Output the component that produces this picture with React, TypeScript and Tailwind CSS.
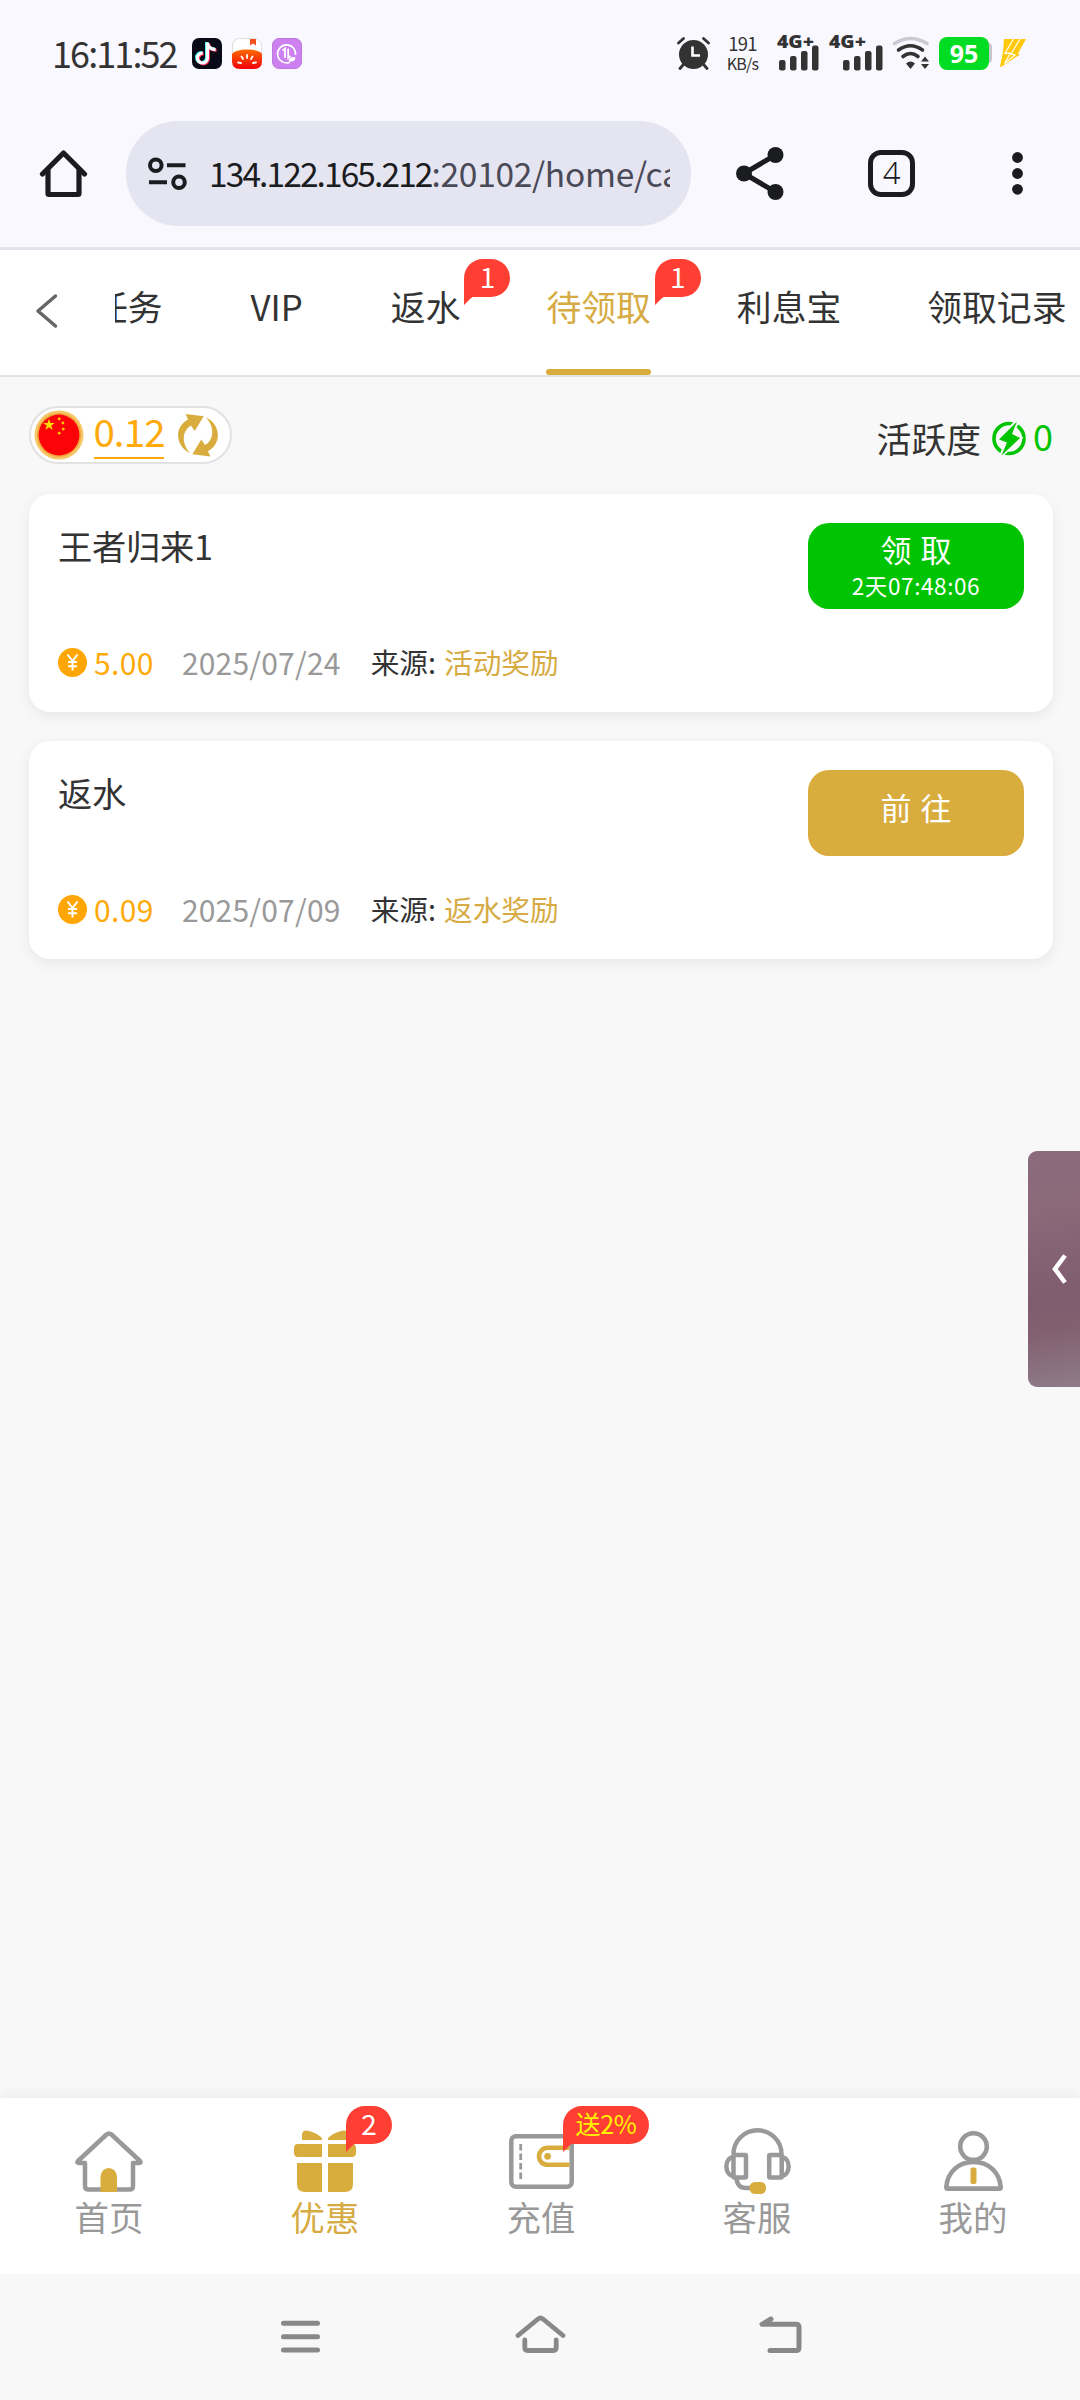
import type { ReactNode } from "react"
import clsx from "clsx"

const tabs = [
  { label: "任务" },
  { label: "VIP" },
  { label: "返水", badge: "1" },
  { label: "待领取", badge: "1", active: true },
  { label: "利息宝" },
  { label: "领取记录" },
]

const rewards = [
  {
    title: "王者归来1",
    amount: "5.00",
    date: "2025/07/24",
    source: "活动奖励",
    action: "领取",
    countdown: "2天07:48:06",
  },
  {
    title: "返水",
    amount: "0.09",
    date: "2025/07/09",
    source: "返水奖励",
    action: "前往",
  },
]

function Badge({ children, className }: { children: ReactNode; className?: string }) {
  return (
    <span
      className={clsx(
        "absolute flex h-[38px] items-center justify-center rounded-[19px] rounded-bl-none bg-[#ff3f33] text-[28px] leading-[38px] whitespace-nowrap",
        className
      )}
    >
      <span className="-mt-[5px]">{children}</span>
      <svg className="absolute top-[37px] left-0" width="11" height="9" viewBox="0 0 11 9">
        <path d="M0 0H11Q8 1 6 3L0 9Z" fill="#ff3f33" />
      </svg>
    </span>
  )
}

function SignalBars({ width, offset }: { width: number; offset: number }) {
  return (
    <svg className="overflow-visible" width={width} height="36" viewBox={`0 0 ${width} 36`} fill="#333">
      <text
        x="0"
        y="13.2"
        fontSize="18"
        fontWeight="800"
        fontFamily="Open Sans, sans-serif"
        textLength="37"
        lengthAdjust="spacingAndGlyphs"
      >
        4G+
      </text>
      <rect x={offset} y="25" width="6.5" height="10.5" rx="2.2" />
      <rect x={offset + 11} y="21" width="6.5" height="14.5" rx="2.2" />
      <rect x={offset + 22} y="16" width="6.5" height="19.5" rx="2.2" />
      <rect x={offset + 33} y="10.5" width="6.5" height="25" rx="2.2" />
    </svg>
  )
}

function StatusBar() {
  return (
    <div className="flex h-[106px] items-center pl-[52px] text-[#333]">
      <span className="-mt-[2px] w-[140px] text-[36px] leading-[50px] tracking-[-1.9px] whitespace-nowrap">
        16:11:52
      </span>
      <svg width="30" height="31" viewBox="0 0 30 31">
        <rect width="30" height="31" rx="7" fill="#090a18" />
        <g fill="none" strokeWidth="3.2">
          <path d="M15.4 4.5V20a5 5 0 1 1-4.6-5M15.4 5c.6 4 3.6 6.4 8.2 6.7" stroke="#25f4ee" transform="translate(-.8 -.5)" />
          <path d="M15.4 4.5V20a5 5 0 1 1-4.6-5M15.4 5c.6 4 3.6 6.4 8.2 6.7" stroke="#fe2c55" transform="translate(1 .8)" />
          <path d="M15.4 4.5V20a5 5 0 1 1-4.6-5M15.4 5c.6 4 3.6 6.4 8.2 6.7" stroke="#fff" />
        </g>
      </svg>
      <svg className="ml-[10px]" width="30" height="31" viewBox="0 0 30 31">
        <defs>
          <linearGradient id="tomato" x1="0" y1="0" x2="0" y2="1">
            <stop offset="0" stopColor="#ff6a00" />
            <stop offset="1" stopColor="#f00008" />
          </linearGradient>
        </defs>
        <rect x=".5" y=".5" width="29" height="30" rx="7" fill="#fff" stroke="#ddd" />
        <path d="M18 1h6v6.500l-3-2-3 2Z" fill="#f7511f" />
        <path d="M0 16C4 10 26 10 30 16V23Q30 31 22 31H8Q0 31 0 23Z" fill="url(#tomato)" />
        <path d="M15 17v3M9.5 18.5l1.5 2.5M20.5 18.5l-1.5 2.5M6 24.5l3 .5M24 24.5l-3 .5" stroke="#fff" strokeWidth="1.8" strokeLinecap="round" />
      </svg>
      <svg className="ml-[10px]" width="30" height="31" viewBox="0 0 30 31" fill="none" stroke="#fff">
        <rect x=".5" y=".5" width="29" height="30" rx="6.5" fill="#cd80f0" stroke="#bd78dc" />
        <path d="M18 24.2A9 9 0 1 1 23.5 17" strokeWidth="1.6" />
        <path d="M10.5 12.5l2.5-2v9.5M16.200 10.500V20l2.500-2" strokeWidth="1.8" />
        <path d="M16.5 23Q17 18.5 23.5 19Q23 25 16.5 23Z" fill="#fff" stroke="none" />
      </svg>

      <svg className="ml-[375px]" width="33" height="33" viewBox="0 0 33 33">
        <circle cx="16.5" cy="17.5" r="14.5" fill="#333" />
        <path d="M1.5 6L6.5 1.5M31.5 6L26.5 1.5M6 28L3 31.5M27 28l3 3.5" stroke="#333" strokeWidth="2.8" strokeLinecap="round" />
        <path d="M15.5 9.5V18.5H23" fill="none" stroke="#fff" strokeWidth="2.6" />
      </svg>
      <div className="ml-[14px] flex w-[37px] flex-col items-center text-[18.5px] leading-[20px] tracking-[-0.8px]">
        <span>191</span>
        <span className="text-[16px]">KB/s</span>
      </div>
      <div className="ml-[16px]">
        <SignalBars width={42} offset={2} />
      </div>
      <div className="ml-[10px]">
        <SignalBars width={55} offset={14} />
      </div>
      <svg className="ml-[8px]" width="38" height="34" viewBox="0 0 38 34" fill="none" strokeWidth="3.6" strokeLinecap="round">
        <path d="M2.5 7.5Q18.5 -2.5 35 7.5" stroke="#cccad2" />
        <path d="M6.5 14Q18.5 5.5 30.5 14M11 20.5Q18.5 14.5 26 20.5" stroke="#333" />
        <path d="M14 27.5Q18.5 23.5 23 27.5L18.5 33Z" fill="#333" />
        <path d="M29 25.5L33 20.5 37 25.5ZM29 28L33 33 37 28Z" fill="#333" />
      </svg>
      <div className="ml-[9px] flex items-center">
        <span className="z-10 flex h-[33px] w-[50px] items-center justify-center rounded-[8px] bg-[#02dc22] font-['Open_Sans'] text-[25px] leading-[33px] font-bold text-white">
          95
        </span>
        <span className="-ml-[5px] h-[20px] w-[8px] rounded-r-[4px] bg-[#c7c6cd]" />
      </div>
      <svg className="ml-[8px]" width="26" height="28" viewBox="0 0 26 28">
        <path d="M4 0H26L18 14.5H17L20 15.5L1 28L0 27.5L3 13Z" fill="#ffc80a" />
        <path d="M13.5 0L5 14.500 10.5 14 4.5 24.5 15 16 11 15 20 0" fill="none" stroke="#fffbe8" strokeWidth="1.3" />
      </svg>
    </div>
  )
}

function BrowserBar() {
  return (
    <div className="flex h-[144px] items-start border-b-[3px] border-[#e4e3ec] pt-[15px] text-[#1b1c20]">
      <svg className="mt-[28px] ml-[39px]" width="49" height="49" viewBox="0 0 49 49" fill="none" stroke="currentColor" strokeWidth="5.2" strokeLinecap="round" strokeLinejoin="round">
        <path d="M3.5 25L24.5 4 45.5 25" />
        <path d="M9 21V44.5Q9 45.5 10 45.5H39Q40 45.5 40 44.5V21" />
      </svg>
      <div className="ml-[38px] flex h-[105px] w-[565px] items-center rounded-[52px] bg-[#e5e4f1] pl-[22px]">
        <svg width="39" height="34" viewBox="0 0 39 34" fill="none" stroke="currentColor" strokeWidth="4">
          <circle cx="7.8" cy="8.3" r="5.8" />
          <path d="M19 8.3H37.5M1 25.3H19" />
          <circle cx="31" cy="25.3" r="5.8" />
        </svg>
        <span className="-mt-[2px] ml-[22px] w-[461px] overflow-hidden text-[33.5px] leading-[50px] tracking-[-1.9px] whitespace-nowrap">
          134.122.165.212
          <span className="tracking-[-0.3px] text-[#4a4a57]">:20102/home/cash</span>
        </span>
      </div>
      <svg className="mt-[26px] ml-[45px]" width="48" height="53" viewBox="0 0 48 53" fill="currentColor">
        <path d="M8 26.5L39.5 8M8 26.5L39.5 45" stroke="currentColor" strokeWidth="5" />
        <circle cx="8" cy="26.5" r="8" />
        <circle cx="39.5" cy="8" r="8" />
        <circle cx="39.5" cy="45" r="8" />
      </svg>
      <div className="mt-[29px] ml-[84px] flex h-[47px] w-[47px] items-center justify-center rounded-[13px] border-[5px] border-current font-['Noto_Sans'] text-[31px] leading-[35px] font-light">
        <span className="-mt-[2px]">4</span>
      </div>
      <svg className="mt-[31px] ml-[97px]" width="11" height="43" viewBox="0 0 11 43" fill="currentColor">
        <circle cx="5.5" cy="5.5" r="5.4" />
        <circle cx="5.5" cy="21.5" r="5.4" />
        <circle cx="5.5" cy="37.3" r="5.4" />
      </svg>
    </div>
  )
}

function TabHeader() {
  return (
    <div className="flex h-[127px] border-b-2 border-[#e2e2e2] bg-white">
      <svg className="mt-[43px] ml-[35px] shrink-0" width="23" height="36" viewBox="0 0 23 36" fill="none" stroke="#666" strokeWidth="3.5" strokeLinecap="round" strokeLinejoin="round">
        <path d="M20.5 3L3 18 20.5 33" />
      </svg>
      <div className="ml-[57px] flex w-[965px] gap-[86px] overflow-hidden">
        {tabs.map((tab, index) => (
          <div
            key={tab.label}
            className={clsx(
              "relative flex h-[125px] shrink-0 flex-col text-[34.8px] leading-[50px] whitespace-nowrap",
              index === 0 && "-ml-[22px]",
              index === 1 && "px-[2px]",
              tab.active ? "text-[#d6ab43]" : "text-[#333]"
            )}
          >
            <span className="mt-[31px]">{tab.label}</span>
            {tab.active && <span className="mt-auto h-[6px] rounded-full bg-[#d9ad3d]" />}
            {tab.badge && (
              <Badge className="top-[9px] left-full ml-[4px] w-[46px] text-white">{tab.badge}</Badge>
            )}
          </div>
        ))}
      </div>
    </div>
  )
}

function BalanceRow() {
  return (
    <div className="mt-[29px] flex h-[58px] items-start justify-between">
      <div className="flex h-[58px] w-[203px] items-center rounded-full border-2 border-[#e2e2e2] bg-white pl-[3px]">
        <svg width="50" height="50" viewBox="0 0 49 49">
          <circle cx="24.5" cy="24.5" r="24" fill="#f6c766" />
          <circle cx="24.5" cy="24.5" r="21.5" fill="#f0a33c" />
          <circle cx="24.5" cy="24.5" r="20" fill="#fb0309" />
          <path d="M14.7 8.5l1.4 4.2h4.3l-3.5 2.6 1.4 4.2-3.6-2.6-3.6 2.6 1.4-4.2L9 12.7h4.3Z" fill="#ffde00" />
          <g fill="#ffc800">
            <circle cx="24.7" cy="8.7" r="1.4" />
            <circle cx="28.3" cy="12.7" r="1.4" />
            <circle cx="28.7" cy="18.7" r="1.4" />
            <circle cx="24.7" cy="22.7" r="1.4" />
          </g>
        </svg>
        <span className="ml-[10px] flex h-[47px] w-[70px] justify-center border-b-2 border-[#ffaa09] text-[38.5px] leading-[37px] tracking-[-0.9px] text-[#ffaa09]">
          0.12
        </span>
        <svg className="ml-[14px]" width="40" height="43" viewBox="0 0 40 43" fill="#d9ad3d">
          <path id="arrow" d="M7.7 0L25.7 2.3 16.7 17 13 11.5C4 17 3 29 12 39C-3 32-4 13 10 5.5Z" />
          <use href="#arrow" transform="rotate(180 20 21.3)" />
        </svg>
      </div>
      <div className="mt-[9px] flex items-center text-[34.8px] leading-[46px] text-[#333]">
        <span>活跃度</span>
        <svg className="ml-[11px]" width="34" height="35" viewBox="0 0 34 35" fill="#00c401">
          <circle cx="17" cy="17.5" r="15" fill="none" stroke="#00c401" strokeWidth="3.6" />
          <path d="M25 .5L7 18.5 15 21.5 9.5 34 28 17 20 13Z" stroke="#f8f8f8" strokeWidth="4" />
          <path d="M25 .5L7 18.5 15 21.5 9.5 34.5 28 17 20 13Z" />
        </svg>
        <span className="-mt-[6px] ml-[7px] text-[36px] text-[#00c401]">0</span>
      </div>
    </div>
  )
}

function RewardCard({ reward }: { reward: (typeof rewards)[number] }) {
  return (
    <div className="flex h-[218px] flex-col justify-between rounded-[21px] bg-white pt-[29px] pr-[29px] pb-[25px] pl-[29px] shadow-[0_4px_14px_rgba(0,0,0,0.07)]">
      <div className="flex items-start justify-between">
        <h3 className="-mt-[1px] text-[34.3px] leading-[46px] tracking-[-0.3px] text-[#333]">{reward.title}</h3>
        <button
          className={clsx(
            "flex h-[86px] w-[216px] flex-col items-center rounded-[21px] text-[31px] leading-[40px] text-white",
            reward.countdown ? "bg-[#00c401] pt-[6px]" : "bg-[#d9ad3d] pt-[17px]"
          )}
        >
          <span className="-mr-[9px] tracking-[9px]">{reward.action}</span>
          {reward.countdown && (
            <span className="text-[22.5px] leading-[33px] tracking-[0.6px]">{reward.countdown}</span>
          )}
        </button>
      </div>
      <div className="flex items-center text-[28.7px] leading-[50px]">
        <svg width="29" height="29" viewBox="0 0 29 29">
          <circle cx="14.5" cy="14.5" r="14.5" fill="#ffa604" />
          <path d="M9.5 6.5L14.5 13 19.5 6.5M14.5 13V22.5M10 14H19M10 18.2H19" fill="none" stroke="#fff" strokeWidth="2" />
        </svg>
        <span className="ml-[7px] text-[30px] tracking-[0.4px] text-[#ffaa09]">{reward.amount}</span>
        <span className="ml-[28px] text-[30px] tracking-[0.2px] text-[#999]">{reward.date}</span>
        <span className="ml-[30px] text-[#333]">来源:</span>
        <span className="ml-[8px] text-[#d6ab43]">{reward.source}</span>
      </div>
    </div>
  )
}

function HomeIcon() {
  return (
    <svg width="68" height="61" viewBox="0 0 68 61">
      <path d="M31.5 3.5Q34 1.5 36.5 3.5L65 30Q66.5 32 64 32H58V55Q58 58.5 54.5 58.5H13.5Q10 58.5 10 55V32H4Q1.5 32 3 30Z" fill="none" stroke="#999" strokeWidth="4.5" strokeLinejoin="round" />
      <path d="M25.5 61V46a8.2 9 0 0 1 16.5 0V61Z" fill="#d9ad3d" />
    </svg>
  )
}

function GiftIcon() {
  return (
    <svg width="62" height="62" viewBox="0 0 62 62" fill="#d9ad3d">
      <path d="M8 10V4Q9-1 15 1Q23 3 28 8V10ZM54 10V4Q53-1 47 1Q39 3 34 8V10Z" />
      <path d="M28 14V27H4Q0 27 0 23V18Q0 14 4 14ZM34 14V27H58Q62 27 62 23V18Q62 14 58 14Z" />
      <path d="M3 33H28V62H11Q3 62 3 54ZM59 33H34V62H51Q59 62 59 54Z" />
    </svg>
  )
}

function WalletIcon() {
  return (
    <svg width="65" height="55" viewBox="0 0 65 55" fill="none" strokeWidth="4.5">
      <rect x="2.3" y="2.3" width="60.4" height="50.4" rx="4.5" stroke="#999" />
      <path d="M11.7 10V46" stroke="#999" strokeWidth="2.8" strokeDasharray="6.5 3" />
      <path d="M60.5 13.8H38.5a8.5 8.5 0 0 0 0 17H60.5" stroke="#d9ad3d" />
      <circle cx="38.6" cy="22.3" r="3.4" fill="#d9ad3d" />
    </svg>
  )
}

function HeadsetIcon() {
  return (
    <svg width="67" height="66" viewBox="0 0 67 66" fill="none" stroke="#999" strokeWidth="4.5">
      <path d="M9.5 26a24 23.7 0 0 1 48 0" />
      <rect x="9.5" y="27" width="12.5" height="22.5" rx="1" />
      <rect x="45.2" y="27" width="12.5" height="22.5" rx="1" />
      <path d="M9.5 29C0 30 0 47 9.5 48M57.5 29C67 30 67 47 57.5 48" />
      <path d="M12.5 50Q13 60 22 60H27" />
      <rect x="25.5" y="54" width="16.5" height="12" rx="5.5" fill="#d9ad3d" stroke="none" />
    </svg>
  )
}

function PersonIcon() {
  return (
    <svg width="59" height="60" viewBox="0 0 59 60" fill="none" stroke="#999" strokeWidth="4.6">
      <circle cx="29.5" cy="15.6" r="13.3" />
      <path d="M3.5 57.6Q2.3 57.6 2.3 56C3.5 41 14.5 31 29.5 31S55.5 41 56.7 56Q56.7 57.6 55.5 57.6Z" strokeLinejoin="round" />
      <rect x="26.5" y="36.5" width="6" height="16.5" rx="2" fill="#d9ad3d" stroke="none" />
    </svg>
  )
}

const navItems = [
  { label: "首页", icon: <HomeIcon /> },
  {
    label: "优惠",
    icon: <GiftIcon />,
    active: true,
    badge: <Badge className="top-[8px] left-[130px] w-[46px] text-white">2</Badge>,
  },
  {
    label: "充值",
    icon: <WalletIcon />,
    badge: (
      <Badge className="top-[8px] left-[131px] w-[86px] tracking-[-0.3px] text-[#fff200]">
        <span className="text-[25px]">送2%</span>
      </Badge>
    ),
  },
  { label: "客服", icon: <HeadsetIcon /> },
  { label: "我的", icon: <PersonIcon /> },
]

function BottomNav() {
  return (
    <nav className="grid h-[176px] grid-cols-5 bg-white shadow-[0_-4px_12px_rgba(0,0,0,0.05)]">
      {navItems.map((item) => (
        <div
          key={item.label}
          className={clsx(
            "relative flex flex-col items-center pl-[2px] text-[34.4px] leading-[50px]",
            item.active ? "text-[#d6ab43]" : "text-[#999]"
          )}
        >
          <div className="mt-[28px] flex h-[70px] items-center">{item.icon}</div>
          <span className="-mt-[5px]">{item.label}</span>
          {item.badge}
        </div>
      ))}
    </nav>
  )
}

function SystemNav() {
  return (
    <div className="flex h-[126px] items-start bg-[#f8f8f8] pt-[41px]">
      <svg className="mt-[5px] ml-[280px]" width="41" height="34" viewBox="0 0 41 34" stroke="#888" strokeWidth="5" strokeLinecap="round">
        <path d="M3.5 3.3H37.5M3.5 16.7H37.5M3.5 30H37.5" />
      </svg>
      <svg className="ml-[194px]" width="51" height="39" viewBox="0 0 51 39" fill="none" stroke="#888" strokeWidth="4.8" strokeLinecap="round" strokeLinejoin="round">
        <path d="M3 20.5L23 4Q25.5 2 28 4L48 20.5" />
        <path d="M9.8 25V32.5Q9.8 35.5 12.8 35.5H38.2Q41.2 35.5 41.2 32.5V25" />
      </svg>
      <svg className="ml-[193px]" width="43" height="39" viewBox="0 0 43 39" fill="none" stroke="#888" strokeWidth="5" strokeLinecap="round" strokeLinejoin="round">
        <path d="M12 4L3 9.3H37Q40 9.3 40 12.3V32.5Q40 35.5 37 35.5H11" />
      </svg>
    </div>
  )
}

export default function App() {
  return (
    <div className="relative flex h-[2400px] w-[1080px] flex-col overflow-hidden bg-[#f8f8f8] font-['Noto_Sans_CJK_SC',sans-serif]">
      <header className="bg-[#f9f8ff]">
        <StatusBar />
        <BrowserBar />
      </header>
      <TabHeader />
      <main className="flex flex-1 flex-col pr-[27px] pl-[29px]">
        <BalanceRow />
        <div className="mt-[30px] flex flex-col gap-[29px]">
          {rewards.map((reward) => (
            <RewardCard key={reward.title} reward={reward} />
          ))}
        </div>
      </main>
      <BottomNav />
      <SystemNav />

      {/* edge drawer handle */}
      <div className="absolute top-[1151px] right-0 flex h-[236px] w-[52px] items-center rounded-l-[9px] bg-[linear-gradient(170deg,#8a6c7c_0%,#8b6979_25%,#7f5c6e_60%,#82606f_75%,#8f7b8b_100%)] pl-[24px]">
        <svg width="15" height="30" viewBox="0 0 15 30" fill="none" stroke="#fff" strokeWidth="4.6">
          <path d="M13 1.5L3 15 13 28.5" />
        </svg>
      </div>
    </div>
  )
}
